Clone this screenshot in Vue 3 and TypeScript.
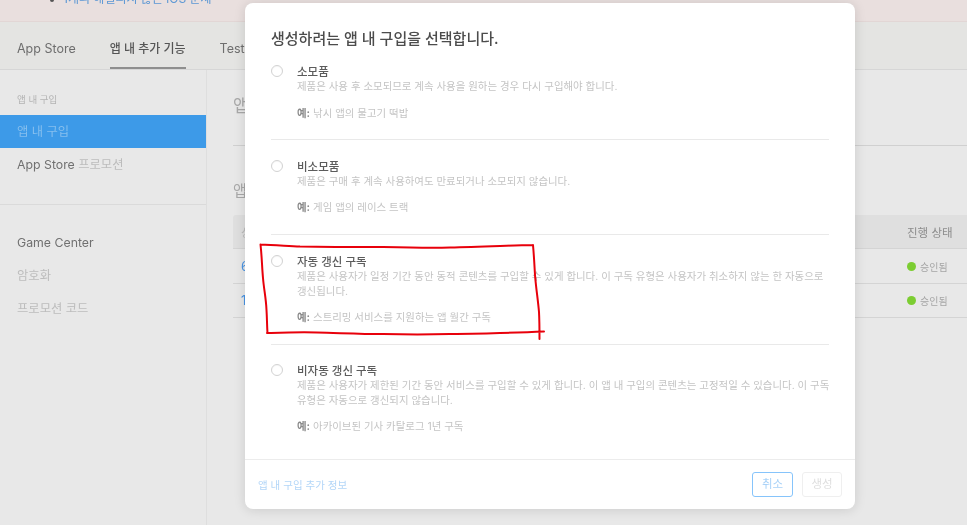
<script setup lang="ts">
interface Option {
  title: string
  lines: string[]
  example: string
}

const options: Option[] = [
  {
    title: '소모품',
    lines: ['제품은 사용 후 소모되므로 계속 사용을 원하는 경우 다시 구입해야 합니다.'],
    example: '낚시 앱의 물고기 떡밥',
  },
  {
    title: '비소모품',
    lines: ['제품은 구매 후 계속 사용하여도 만료되거나 소모되지 않습니다.'],
    example: '게임 앱의 레이스 트랙',
  },
  {
    title: '자동 갱신 구독',
    lines: [
      '제품은 사용자가 일정 기간 동안 동적 콘텐츠를 구입할 수 있게 합니다. 이 구독 유형은 사용자가 취소하지 않는 한 자동으로',
      '갱신됩니다.',
    ],
    example: '스트리밍 서비스를 지원하는 앱 월간 구독',
  },
  {
    title: '비자동 갱신 구독',
    lines: [
      '제품은 사용자가 제한된 기간 동안 서비스를 구입할 수 있게 합니다. 이 앱 내 구입의 콘텐츠는 고정적일 수 있습니다. 이 구독',
      '유형은 자동으로 갱신되지 않습니다.',
    ],
    example: '아카이브된 기사 카탈로그 1년 구독',
  },
]

const rows = ['6', '1']
</script>

<template>
  <div class="page">
    <div class="banner">
      <span class="bullet"></span>
      <span class="banner-text">1개의 해결되지 않은 iOS 문제</span>
    </div>

    <nav class="tabs">
      <span class="tab">App Store</span>
      <span class="tab active">앱 내 추가 기능</span>
      <span class="tab">TestFlight</span>
    </nav>

    <div class="body">
      <aside class="sidebar">
        <div class="side-top">
          <div class="side-label">앱 내 구입</div>
          <div class="side-item selected">앱 내 구입</div>
          <div class="side-item">App Store <span class="faint">프로모션</span></div>
        </div>
        <div class="side-bottom">
          <div class="side-item">Game Center</div>
          <div class="side-item faint">암호화</div>
          <div class="side-item faint">프로모션 코드</div>
        </div>
      </aside>

      <main class="main">
        <h1 class="main-title">앱 내 구입</h1>
        <h2 class="main-sub">앱 내 구입</h2>
        <div class="table">
          <div class="thead">
            <span class="cell-first faint">상품</span>
            <span class="cell-status">진행 상태</span>
          </div>
          <div v-for="row in rows" :key="row" class="trow">
            <span class="cell-first link">{{ row }}</span>
            <span class="cell-status approved"><i class="dot"></i>승인됨</span>
          </div>
        </div>
      </main>
    </div>

    <section class="modal">
      <div class="modal-body">
        <h3 class="modal-title">생성하려는 앱 내 구입을 선택합니다.</h3>
        <div class="options">
          <div v-for="opt in options" :key="opt.title" class="option">
            <span class="radio"></span>
            <div class="option-text">
              <div class="option-title">{{ opt.title }}</div>
              <div class="option-desc">
                <div v-for="line in opt.lines" :key="line">{{ line }}</div>
              </div>
              <div class="option-example"><b>예:</b> {{ opt.example }}</div>
            </div>
          </div>
        </div>
      </div>
      <footer class="modal-footer">
        <span class="more">앱 내 구입 추가 정보</span>
        <div class="buttons">
          <button class="btn primary" type="button">취소</button>
          <button class="btn disabled" type="button">생성</button>
        </div>
      </footer>
    </section>

    <svg class="scribble" width="967" height="525" viewBox="0 0 967 525" fill="none" aria-hidden="true">
      <path
        d="M260.5 244.5 C262 258 262 268 263 278 C264 290 266 298 266.5 310 C267 318 267 326 267.5 333
           M260.5 244.5 C275 245 288 246 300 246.5 C330 247 358 247 383 247 C405 247.5 430 248 450 247.5 C480 247 510 245.5 533 245
           M533 245 C534 256 534.5 266 535 275 C536 288 538 300 539 312 C539.5 322 539.5 330 539.5 339
           M267 333 C285 332.5 300 332 317 332.5 C340 333 360 334 383 334 C405 334.5 430 334.5 450 334 C480 333.5 515 333 544 331.5"
        stroke="#e8000b"
        stroke-width="2"
        stroke-linecap="round"
      />
    </svg>
  </div>
</template>

<style scoped>
.page {
  position: relative;
  width: 967px;
  height: 525px;
  overflow: hidden;
  display: flex;
  flex-direction: column;
  background: #e8e8e8;
  font-family: Inter, "Noto Sans CJK KR", sans-serif;
  color: #6f6f6f;
  filter: blur(0.35px);
}
.banner {
  height: 22px;
  flex: none;
  box-sizing: border-box;
  background: #e9dfde;
  border-bottom: 1px solid #e2d6d5;
  display: flex;
  align-items: flex-end;
  gap: 9px;
  padding: 0 0 14px 50px;
  overflow: hidden;
  font-size: 12px;
  line-height: 16px;
}
.bullet {
  width: 4px;
  height: 4px;
  border-radius: 50%;
  background: #555;
  margin-bottom: 5px;
}
.banner-text {
  color: #5b97d4;
  white-space: nowrap;
}
.tabs {
  height: 48px;
  flex: none;
  box-sizing: border-box;
  background: #e4e4e2;
  border-bottom: 1px solid #d6d6d6;
  display: flex;
  gap: 34px;
  padding-left: 17px;
  font-size: 12.5px;
}
.tab {
  height: 47px;
  box-sizing: border-box;
  padding-top: 18px;
  line-height: 18px;
  color: #6e6e6e;
  white-space: nowrap;
}
.tab.active {
  color: #555;
  font-size: 12px;
  font-weight: 500;
  border-bottom: 2px solid #8e8e8e;
}
.body {
  flex: 1;
  display: flex;
  min-height: 0;
}
.sidebar {
  width: 207px;
  flex: none;
  box-sizing: border-box;
  border-right: 1px solid #dedede;
  font-size: 12.3px;
}
.side-top {
  height: 135px;
  box-sizing: border-box;
  padding-top: 23px;
  border-bottom: 1px solid #dadada;
}
.side-label {
  padding-left: 17px;
  font-size: 9.5px;
  line-height: 14px;
  color: #b4b4b4;
  margin-bottom: 8px;
}
.side-item {
  height: 33px;
  line-height: 33px;
  padding-left: 17px;
  color: #707070;
}
.side-item.selected {
  background: #3d9ae8;
  color: #86bfee;
}
.side-bottom {
  padding-top: 21px;
}
.faint,
.side-item.faint {
  color: #bcbcbc;
}
.main {
  flex: 1;
  min-width: 0;
  padding-left: 26px;
}
.main-title {
  margin: 0;
  height: 76px;
  box-sizing: border-box;
  padding-top: 24px;
  border-bottom: 1px solid #d0d0d0;
  font-size: 17px;
  line-height: 24px;
  font-weight: 400;
  color: #a8a8a8;
}
.main-sub {
  margin: 0;
  height: 69px;
  box-sizing: border-box;
  padding-top: 35px;
  font-size: 15px;
  line-height: 20px;
  font-weight: 400;
  color: #a8a8a8;
}
.thead,
.trow {
  display: flex;
  justify-content: space-between;
  align-items: center;
  padding-left: 8px;
  border-bottom: 1px solid #d4d4d4;
  font-size: 11.5px;
}
.thead {
  height: 33px;
  background: #dfdfdf;
  border-radius: 3px 0 0 0;
}
.trow {
  height: 33.5px;
}
.cell-status {
  width: 60px;
  color: #8c8c8c;
  white-space: nowrap;
}
.link {
  color: #4a94e4;
  font-size: 13px;
}
.approved {
  display: flex;
  align-items: center;
  gap: 4px;
  margin-top: 1px;
  color: #a5a5a5;
  font-size: 10px;
}
.dot {
  width: 9px;
  height: 9px;
  border-radius: 50%;
  background: #7ccd32;
}
.modal {
  position: absolute;
  left: 245px;
  top: 3px;
  width: 610px;
  height: 506px;
  display: flex;
  flex-direction: column;
  background: #fff;
  border-radius: 8px;
  box-shadow: 0 1px 12px rgba(0, 0, 0, 0.13);
}
.modal-body {
  flex: 1;
  padding: 25px 26px 0;
}
.modal-title {
  margin: 0 0 15px;
  font-size: 15px;
  line-height: 22px;
  font-weight: 500;
  color: #4c4c4c;
}
.option {
  display: flex;
  gap: 14px;
  padding: 20px 0 19px;
  border-bottom: 1px solid #e9e9e9;
}
.option:first-child {
  padding: 0 0 18px;
}
.option:last-child {
  padding-top: 19px;
  border-bottom: 0;
}
.radio {
  width: 12px;
  height: 12px;
  flex: none;
  box-sizing: border-box;
  border: 1px solid #d2d2d2;
  border-radius: 50%;
  box-shadow: inset 0 1px 1px rgba(0, 0, 0, 0.04);
}
.option-text {
  min-width: 0;
}
.option-title {
  font-size: 11.5px;
  line-height: 15px;
  font-weight: 500;
  color: #5c5c5c;
}
.option-desc {
  font-size: 10.45px;
  line-height: 14.5px;
  color: #c4c4c4;
  white-space: nowrap;
}
.option-example {
  margin-top: 11px;
  font-size: 10.45px;
  line-height: 15px;
  color: #c4c4c4;
  white-space: nowrap;
}
.option-example b {
  color: #8a8a8a;
  font-weight: 700;
}
.modal-footer {
  height: 50px;
  flex: none;
  box-sizing: border-box;
  border-top: 1px solid #ececec;
  display: flex;
  align-items: center;
  justify-content: space-between;
  padding: 0 13px;
}
.more {
  font-size: 10.5px;
  color: #b3d6f8;
}
.buttons {
  display: flex;
  gap: 9px;
}
.btn {
  width: 41px;
  height: 25px;
  padding: 0;
  background: #fff;
  border-radius: 3px;
  font: inherit;
  font-size: 11.5px;
  line-height: 21px;
}
.btn.primary {
  border: 1px solid #86c4fb;
  color: #a9d2f8;
}
.btn.disabled {
  width: 40px;
  border: 1px solid #efefef;
  color: #dedede;
}
.scribble {
  position: absolute;
  inset: 0;
  pointer-events: none;
}
</style>

<style>
html,
body {
  margin: 0;
  overflow: hidden;
}
</style>
